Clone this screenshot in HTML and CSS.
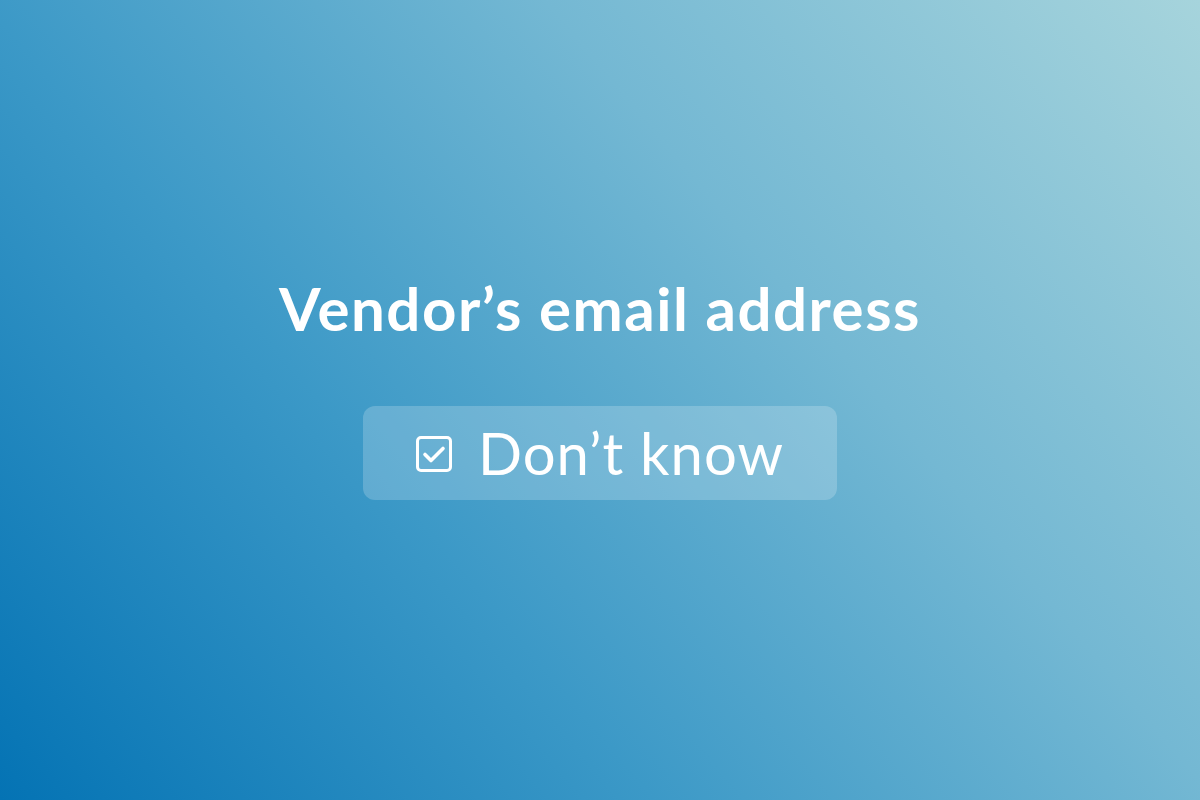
FILE: index.html
```html
<!DOCTYPE html>
<html lang="en">
<head>
<meta charset="utf-8">
<title>Vendor's email address</title>
<link rel="stylesheet" href="styles.css">
</head>
<body>
<main class="stage">
  <h1 class="title">Vendor’s email address</h1>
  <button class="option" type="button">
    <svg class="check" viewBox="0 0 36 36" width="36" height="36" aria-hidden="true">
      <rect x="1.5" y="1.5" width="33" height="33" rx="3.5" fill="none" stroke="#fff" stroke-width="3"/>
      <path d="M9 18.5 L15 24.5 L27 12.5" fill="none" stroke="#fff" stroke-width="3.6" stroke-linecap="round" stroke-linejoin="round"/>
    </svg>
    <span class="label">Don’t know</span>
  </button>
</main>
</body>
</html>
```

FILE: styles.css
```css
html, body {
  margin: 0;
  padding: 0;
  width: 1200px;
  height: 800px;
  overflow: hidden;
}

body {
  background: linear-gradient(50deg, #0473b4 0%, #3c99c7 35%, #74b8d3 65%, #a6d4dc 100%);
  font-family: "Lato", "Open Sans", sans-serif;
  color: #fff;
}

.stage {
  height: 800px;
  display: flex;
  flex-direction: column;
  align-items: center;
  padding-top: 268px;
  box-sizing: border-box;
}

.title {
  margin: 0;
  font-size: 60px;
  font-weight: 700;
  line-height: 80px;
  letter-spacing: 1.5px;
}

.option {
  margin-top: 58px;
  width: 474px;
  height: 94px;
  border: none;
  border-radius: 12px;
  background: rgba(255, 255, 255, 0.2);
  display: flex;
  align-items: center;
  justify-content: center;
  gap: 26px;
  color: #fff;
  font-family: inherit;
  padding: 0;
}

.check {
  flex: none;
  margin-top: 2px;
}

.label {
  font-size: 58px;
  font-weight: 400;
  line-height: 1;
  letter-spacing: 1px;
}
```
